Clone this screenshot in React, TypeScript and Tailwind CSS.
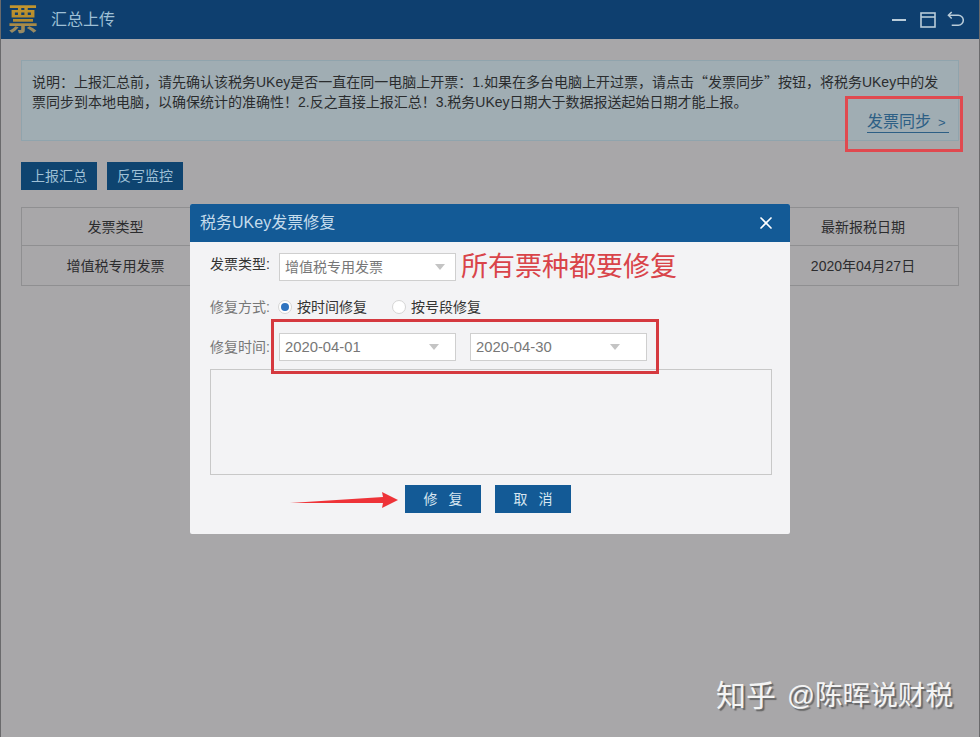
import { X } from "lucide-react"

const cjk = "font-['Liberation_Sans','Noto_Sans_CJK_SC',sans-serif]"

function Arrow() {
  return <span className="h-0 w-0 border-x-[5px] border-t-[6px] border-x-transparent border-t-[#c4c4c4]" />
}

function Radio({ on, label }: { on?: boolean; label: string }) {
  return (
    <div className="flex items-center gap-[5px] text-[14px] text-[#333]">
      <span className="flex h-[14px] w-[14px] items-center justify-center rounded-full border border-[#d5d5d5] bg-white">
        {on && <span className="h-[8px] w-[8px] rounded-full bg-[#2f74c0]" />}
      </span>
      {label}
    </div>
  )
}

export default function App() {
  return (
    <div className={`${cjk} relative h-[737px] w-[980px] overflow-hidden bg-[#a8a7a9]`}>
      {/* title bar */}
      <div className="flex h-[39px] items-center justify-between bg-[#0e3f6f] pl-[8px] pr-[16px]">
        <div className="flex items-center gap-[13px]">
          <span className="bg-gradient-to-b from-[#c2962f] via-[#b48a2c] to-[#8f8a70] bg-clip-text text-[30px] font-bold leading-none text-transparent">票</span>
          <span className="text-[16px] text-[#9fc0d6]">汇总上传</span>
        </div>
        <div className="flex items-center">
          <span className="mr-[14px] h-[2px] w-[14px] bg-[#b9ccd9]" />
          <svg className="mr-[11px]" width="16" height="16" viewBox="0 0 16 16" fill="none" stroke="#b9ccd9" strokeWidth="1.6">
            <rect x="1" y="1" width="14" height="14" />
            <path d="M1 5h14" />
          </svg>
          <svg width="17" height="17" viewBox="0 0 18 18" fill="none" stroke="#b9ccd9" strokeWidth="1.6">
            <path d="M5 1 1.5 4.5 5 8" />
            <path d="M2 4.5h10a4.5 4.5 0 0 1 0 10.5H5" />
          </svg>
        </div>
      </div>

      <div className="pl-[21px] pt-[21px]">
        {/* notice */}
        <div className="relative h-[81px] w-[938px] border border-[#90a4ad] bg-[#a0adb3] pl-[10px] pt-[10px] text-[14px] leading-[20px] text-[#2a2c2e]">
          <p className="whitespace-nowrap">
            说明：上报汇总前，请先确认该税务UKey是否一直在同一电脑上开票：1.如果在多台电脑上开过票，请点击<span className="font-['Noto_Sans_CJK_SC',sans-serif]">“</span>发票同步<span className="font-['Noto_Sans_CJK_SC',sans-serif]">”</span>按钮，将税务UKey中的发
            <br />
            票同步到本地电脑，以确保统计的准确性！2.反之直接上报汇总！3.税务UKey日期大于数据报送起始日期才能上报。
          </p>
          <span className="absolute left-[845px] top-[51px] border-b border-[#2d5f85] text-[16px] leading-[19px] text-[#2d5f85]">
            发票同步<span className="ml-[7px] mr-[3px] text-[13px]">&gt;</span>
          </span>
        </div>

        {/* buttons */}
        <div className="mt-[21px] flex gap-[10px]">
          <button className="h-[28px] w-[76px] bg-[#0e4470] text-[14px] text-[#9fc0d6]">上报汇总</button>
          <button className="h-[28px] w-[76px] bg-[#0e4470] text-[14px] text-[#9fc0d6]">反写监控</button>
        </div>

        {/* table behind modal */}
        <div className="mt-[17px] w-[938px] border border-[#8f8f91] text-[14px] text-[#2c2c2e]">
          <div className="flex h-[38px] items-center justify-between border-b border-[#8f8f91] pt-[2px]">
            <span className="w-[187px] text-center">发票类型</span>
            <span className="w-[190px] text-center">最新报税日期</span>
          </div>
          <div className="flex h-[39px] items-center justify-between pt-[2px]">
            <span className="w-[187px] text-center">增值税专用发票</span>
            <span className="w-[190px] text-center">2020年04月27日</span>
          </div>
        </div>
      </div>

      {/* dialog */}
      <div className="absolute left-[190px] top-[204px] w-[600px] overflow-hidden rounded-[2px] bg-[#f3f3f5]">
        <div className="flex h-[38px] items-center justify-between bg-[#135a96] pl-[10px] pr-[14px] text-[16px] text-[#c5dcec]">
          <span>税务UKey发票修复</span>
          <X size={20} strokeWidth={2} className="text-white" />
        </div>
        <div className="px-[20px] pt-[11px]">
          <div className="flex items-center">
            <span className="w-[69px] -translate-y-[3px] text-[14px] text-[#333]">发票类型:</span>
            <div className="flex h-[28px] w-[177px] items-center justify-between border border-[#cfcfcf] bg-white pl-[5px] pr-[10px] text-[14px] text-[#777]">
              <span>增值税专用发票</span>
              <Arrow />
            </div>
            <span className="ml-[5px] text-[27px] leading-none text-[#d9444a]">所有票种都要修复</span>
          </div>
          <div className="mt-[13px] flex h-[26px] items-center">
            <span className="w-[68px] text-[14px] text-[#777]">修复方式:</span>
            <Radio on label="按时间修复" />
            <span className="w-[25px]" />
            <Radio label="按号段修复" />
          </div>
          <div className="mt-[13px] flex items-center gap-[14px]">
            <span className="-mr-[14px] w-[69px] text-[14px] text-[#777]">修复时间:</span>
            <div className="flex h-[28px] w-[177px] items-center justify-between border border-[#cfcfcf] bg-white pl-[5px] pr-[16px] text-[14.8px] text-[#777]">
              <span>2020-04-01</span>
              <Arrow />
            </div>
            <div className="flex h-[28px] w-[177px] items-center justify-between border border-[#cfcfcf] bg-white pl-[5px] pr-[26px] text-[14.8px] text-[#777]">
              <span>2020-04-30</span>
              <Arrow />
            </div>
          </div>
          <div className="mt-[8px] h-[106px] w-[562px] border border-[#c8c8c8] bg-[#f3f3f5]" />
          <div className="ml-[195px] mt-[10px] flex gap-[14px] pb-[21px]">
            <button className="h-[28px] w-[76px] bg-[#135a96] pl-[11px] text-[14px] tracking-[11px] text-[#d7e6f1]">修复</button>
            <button className="h-[28px] w-[76px] bg-[#135a96] pl-[11px] text-[14px] tracking-[11px] text-[#d7e6f1]">取消</button>
          </div>
        </div>
      </div>

      {/* annotations */}
      <div className="absolute left-[845px] top-[96px] h-[56px] w-[118px] border-[3px] border-[#e0494f]" />
      <div className="absolute left-[271px] top-[319px] h-[55px] w-[388px] border-[3px] border-[#d5393f]" />
      <svg className="absolute left-[290px] top-[488px]" width="110" height="24" viewBox="0 0 110 24">
        <path d="M0 15 L93 9 L92 4 L108 12 L92 20 L93 15 Z" fill="#ee3338" />
      </svg>

      {/* watermark */}
      <div className="absolute left-[716px] top-[678px] flex items-center text-[27.6px] leading-[36px] text-[#f4f4f4] [text-shadow:2px_2px_1px_#666]">
        <span className="text-[30px]">知乎</span>
        <span className="ml-[11px]">@陈晖说财税</span>
      </div>

      {/* window edge */}
      <div className="pointer-events-none absolute inset-0 border-x border-[#6a6a6c]" />
    </div>
  )
}
